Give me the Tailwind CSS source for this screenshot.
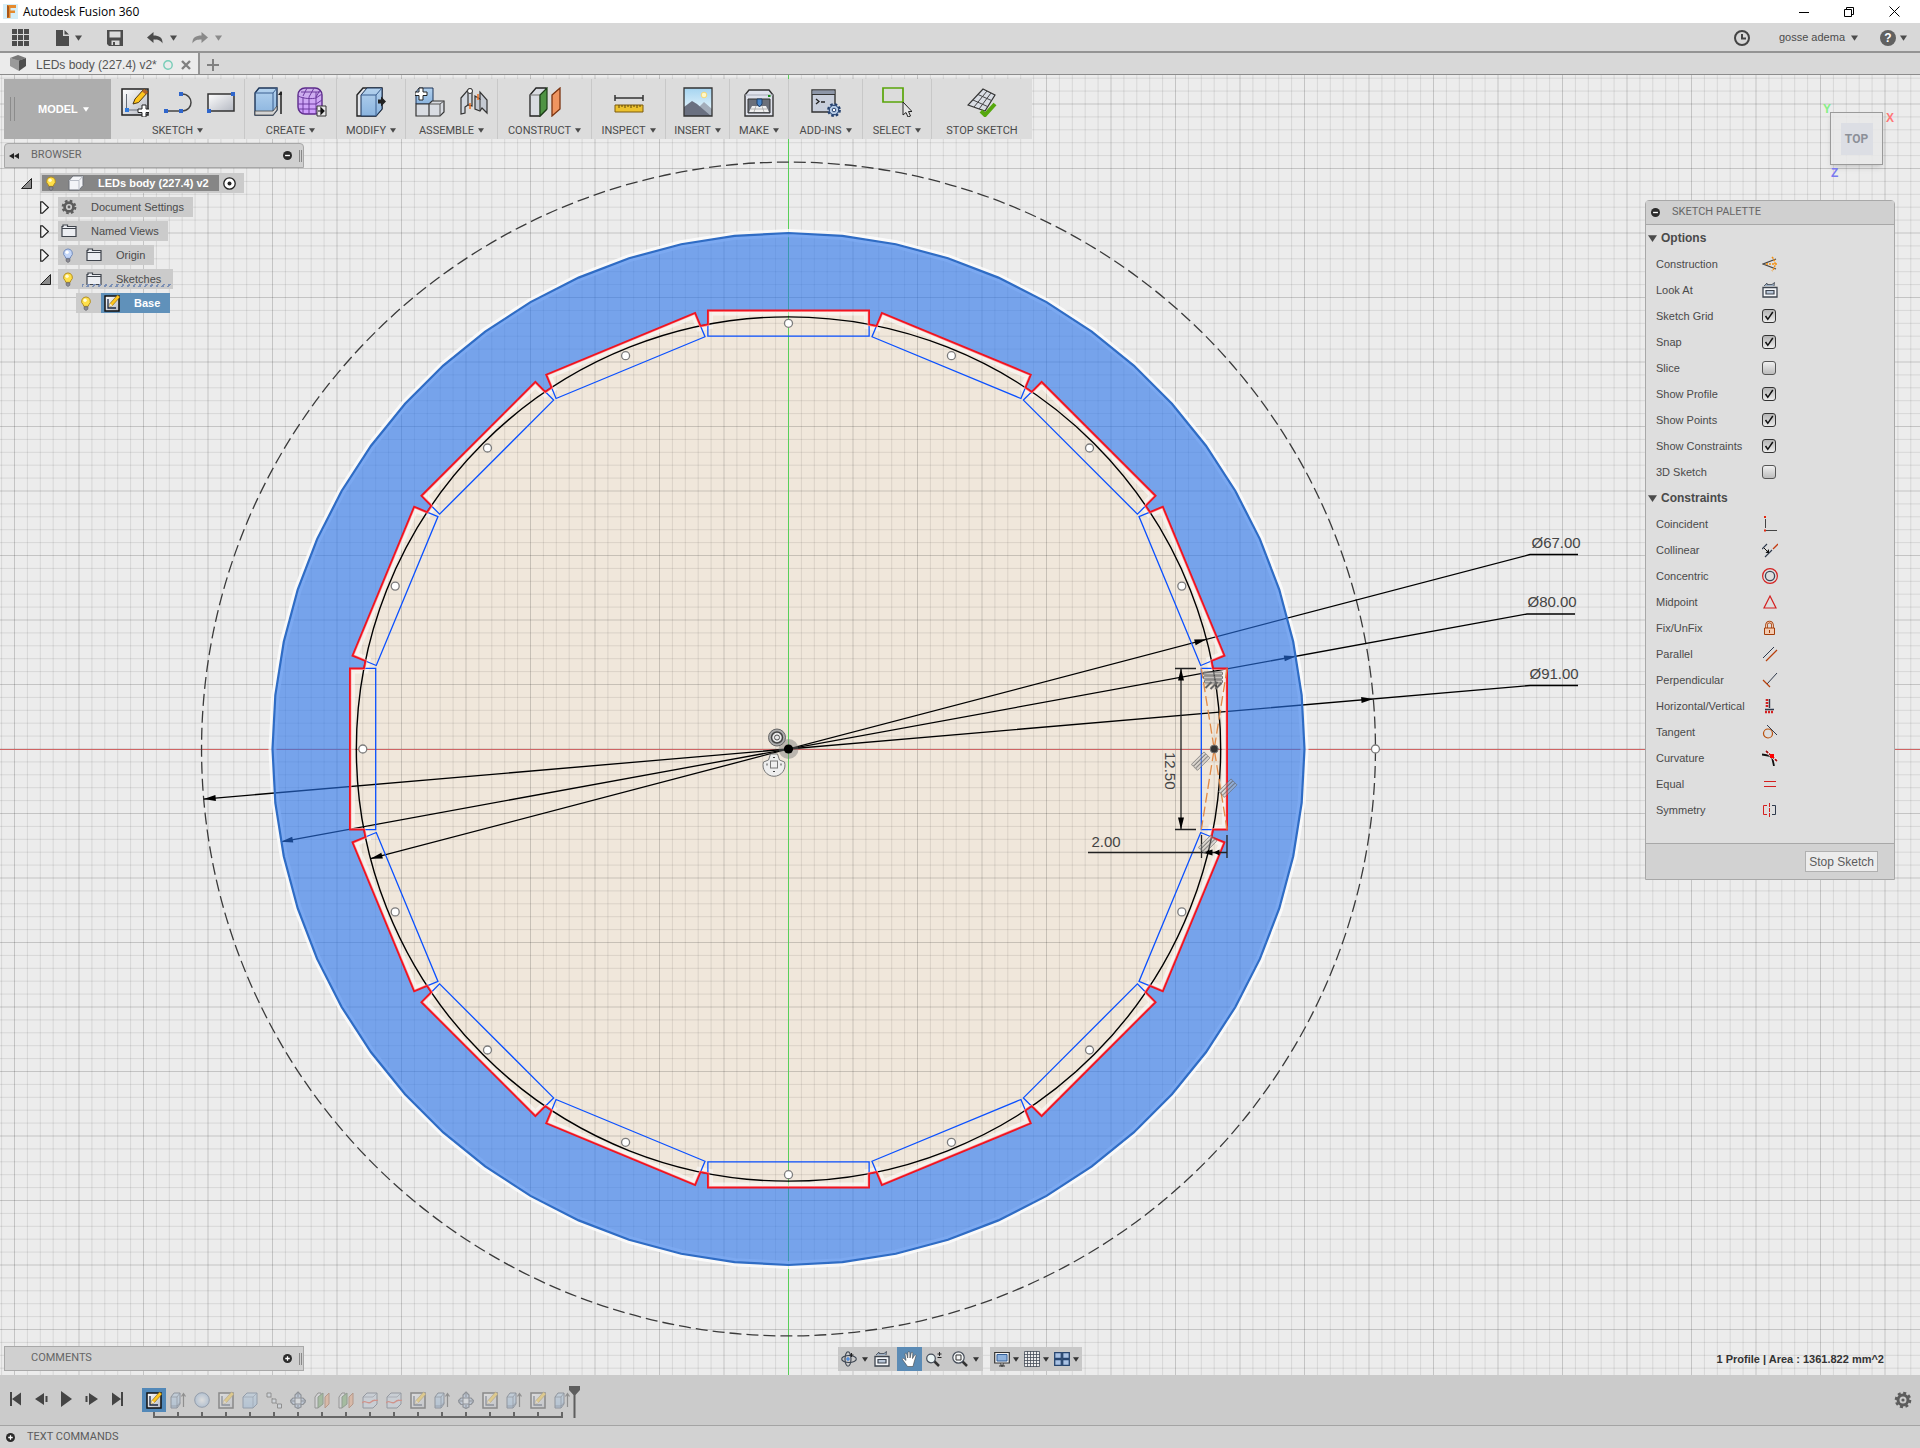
<!DOCTYPE html>
<html lang="en">
  <head>
    <meta charset="UTF-8" />
    <meta name="viewport" content="width=device-width, initial-scale=1.0" />
    <title>Autodesk Fusion 360</title>
    <script src="https://cdn.jsdelivr.net/npm/@tailwindcss/browser@4"></script>
  </head>
  <body class="flex h-screen flex-col overflow-hidden bg-[#ececec] font-['Liberation_Sans',Arial,sans-serif] text-[11px] text-[#4a4a4a]">
    <!-- Shared icons -->
    <svg class="absolute h-0 w-0" aria-hidden="true">
      <defs>
        <linearGradient id="g-blue" x1="0" y1="0" x2="0" y2="1"><stop offset="0" stop-color="#b4d2ee" /><stop offset="1" stop-color="#8ab4df" /></linearGradient>
        <linearGradient id="g-grey" x1="0" y1="0" x2="1" y2="1"><stop offset="0" stop-color="#ffffff" /><stop offset="1" stop-color="#b4b8c2" /></linearGradient>
        <linearGradient id="g-sky" x1="0" y1="0" x2="0" y2="1"><stop offset="0" stop-color="#a5d4f0" /><stop offset="1" stop-color="#f2fbff" /></linearGradient>
        <linearGradient id="g-purple" x1="0" y1="0" x2="0" y2="1"><stop offset="0" stop-color="#cdb3ea" /><stop offset="1" stop-color="#cf9bff" /></linearGradient>
        <radialGradient id="g-ball"><stop offset="0" stop-color="#ffffff" /><stop offset="1" stop-color="#8ab0dc" /></radialGradient>
      </defs>
      <symbol id="caret" viewBox="0 0 8 6"><path d="M0 0h8L4 6z" fill="currentColor" /></symbol>
      <symbol id="plus-dot" viewBox="0 0 10 10"><circle cx="5" cy="5" r="5" fill="#2b2b2b" /><path d="M5 2.5v5M2.5 5h5" stroke="#fff" stroke-width="1.4" /></symbol>
      <symbol id="minus-dot" viewBox="0 0 10 10"><circle cx="5" cy="5" r="5" fill="#2b2b2b" /><path d="M2.3 5h5.4" stroke="#fff" stroke-width="1.5" /></symbol>
      <symbol id="gear" viewBox="0 0 18 18"><circle cx="9" cy="9" r="5" fill="none" stroke="#5c5c5c" stroke-width="3" /><circle cx="9" cy="9" r="7.1" fill="none" stroke="#5c5c5c" stroke-width="2.4" stroke-dasharray="3 2.576" /><circle cx="9" cy="9" r="1.6" fill="#5c5c5c" /></symbol>
      <symbol id="bulb" viewBox="0 0 12 16"><path d="M6 1a4.7 4.7 0 0 1 3 8.300L8.300 11H3.700L3 9.300A4.700 4.700 0 0 1 6 1z" fill="#ffe04a" stroke="#b08a1c" /><circle cx="5" cy="4.500" r="1.800" fill="#fffbd8" /><path d="M4 11.500h4v2.500L6 15.500 4 14z" fill="#8c8c94" stroke="#55555e" stroke-width=".6" /></symbol>
      <symbol id="bulb-off" viewBox="0 0 12 16"><path d="M6 1a4.7 4.7 0 0 1 3 8.300L8.300 11H3.700L3 9.300A4.700 4.700 0 0 1 6 1z" fill="#c3d6f8" stroke="#6d86b8" /><circle cx="5" cy="4.500" r="1.800" fill="#fff" /><path d="M4 11.500h4v2.500L6 15.500 4 14z" fill="#8c8c94" stroke="#55555e" stroke-width=".6" /></symbol>
      <symbol id="folder" viewBox="0 0 16 14"><path d="M1 12.500v-10h1v-1.500h4.500v1.500H15v10z" fill="#eceef2" stroke="#3f444c" stroke-width="1.2" /><path d="M1 4.500h14" stroke="#3f444c" /></symbol>
      <symbol id="cube" viewBox="0 0 16 16"><path d="M1 5.500L5 1h10v9.500L11 15H1z" fill="#f3f4f7" stroke="#6d7178" /><path d="M1 5.500h10V15M11 5.500L15 1" fill="none" stroke="#b9bdc6" /></symbol>
      <symbol id="arrow-open" viewBox="0 0 11 11"><path d="M10.500.5v10H.5z" fill="#8b8b8b" stroke="#222" /></symbol>
      <symbol id="arrow-closed" viewBox="0 0 9 13"><path d="M.7.800h1.800L8.400 6.500 2.500 12.200H.7z" fill="#f4f4f4" stroke="#222" stroke-width="1.200" /></symbol>
      <symbol id="sketch" viewBox="0 0 16 18"><path d="M1 2h14v15H1z" fill="url(#g-grey)" stroke="#111" stroke-width="1.500" /><path d="M4 5v9h8" fill="none" stroke="#1c2a44" stroke-width="1.300" /><path d="M5 13l1-3.500L13.500 1 16 3 8.500 11.500z" fill="#ffc61e" stroke="#7a5a10" stroke-width=".6" /><path d="M5 13l1-3.500 2.500 2z" fill="#f7ead0" /></symbol>
      <symbol id="extrude" viewBox="0 0 16 18"><path d="M1 6l3-4h6v11l-3 4H1z" fill="url(#g-blue)" stroke="#23324a" /><path d="M1 6h6v11M7 6l3-4M1 15h6l3-3.500" fill="none" stroke="#23324a" stroke-width=".7" /><path d="M13.500 16V3M11.500 5.500l2-3 2 3" fill="none" stroke="#222" stroke-width="1.200" /></symbol>
      <symbol id="sphere" viewBox="0 0 16 18"><circle cx="8" cy="9" r="7.300" fill="url(#g-ball)" stroke="#2f4a70" /></symbol>
      <symbol id="box" viewBox="0 0 16 18"><path d="M1 6l4-4h10v11l-4 4H1z" fill="url(#g-blue)" stroke="#2f4a70" /><path d="M1 6h10v11M11 6l4-4" fill="none" stroke="#2f4a70" stroke-width=".6" /></symbol>
      <symbol id="points" viewBox="0 0 16 18"><path d="M3 4l10 11" stroke="#333" stroke-dasharray="2 1.500" /><path d="M1 2h4v4H1zM6 8h4v4H6zM11.500 13h4v4h-4z" fill="#dbe6f4" stroke="#222" /></symbol>
      <symbol id="move" viewBox="0 0 16 18"><path d="M8 1l3 3v3h2l3 3-3 3.500h-2V16l-3 1.500L5 16v-2.500H3L0 10l3-3h2V4z" fill="#a8c2e6" stroke="#222c3c" stroke-width="1.200" /><path d="M5 7h6v6H5z" fill="#e4ebf5" stroke="#222c3c" /><path d="M8 2v4M8 14v3M1 10h4M11 10h4" stroke="#222c3c" /></symbol>
      <symbol id="planes" viewBox="0 0 16 18"><path d="M1 6l3-4h3v11l-3 4H1z" fill="#e2e4e8" stroke="#333" /><path d="M4 6l5-4v11l-5 4z" fill="#5fa052" stroke="#2a4a26" /><path d="M11 6l4-4v11l-4 4z" fill="#ef9a68" stroke="#8a3c14" /></symbol>
      <symbol id="split" viewBox="0 0 16 18"><path d="M1 6l4-4h10v11l-4 4H1z" fill="#c8d4e6" stroke="#333f54" /><path d="M1 6h10l4-4" fill="none" stroke="#333f54" stroke-width=".6" /><path d="M0 12c3-4 6 2 9-1s4-1 7-2" fill="none" stroke="#d8301a" stroke-width="1.300" /></symbol>
      <symbol id="look-at" viewBox="0 0 16 16"><path d="M1 5.500h14V15H1z" fill="#f4f6f9" stroke="#3d444e" stroke-width="1.300" /><path d="M4 8.500h8v3.500H4z" fill="#b9c7d9" stroke="#3d444e" stroke-width="1.200" /><path d="M2 4l3-3v1.500h5L12.500.5 12 4" fill="#9fb2c8" stroke="#3d444e" stroke-width=".8" /></symbol>
      <symbol id="tick" viewBox="0 0 14 14"><path d="M3.500 7l2.300 3.300L10.800 3" fill="none" stroke="#111" stroke-width="1.500" /></symbol>
    </svg>

    <!-- Window title -->
    <header class="flex h-[23px] shrink-0 items-center bg-white pl-[3px] font-['Open_Sans','Noto_Sans',sans-serif] text-[12px] text-black">
      <svg class="h-4 w-4" viewBox="0 0 16 16"><path d="M0 0h15v15H0z" fill="#d5eef8" /><path d="M4 1h9v3H7.500v2.500H12V9H7.500v5H4z" fill="#e58a2e" /><path d="M4 1l2 1.500V13l-2 1z" fill="#a8571a" /></svg>
      <h1 class="ml-1">Autodesk Fusion 360</h1>
      <div class="ml-auto flex items-center gap-[35px] pr-5">
        <button aria-label="Minimize"><svg class="h-[10px] w-[10px]" viewBox="0 0 10 10"><path d="M0 5.500h10" stroke="#000" /></svg></button>
        <button aria-label="Restore"><svg class="h-[10px] w-[10px]" viewBox="0 0 10 10" fill="none" stroke="#000"><path d="M.5 2.500h7v7h-7zM2.500 2.500v-2h7v7h-2" /></svg></button>
        <button aria-label="Close"><svg class="h-[11px] w-[11px]" viewBox="0 0 11 11"><path d="M.5.5l10 10M10.500.5l-10 10" stroke="#000" /></svg></button>
      </div>
    </header>

    <!-- Quick access bar -->
    <div class="flex h-[30px] shrink-0 items-center border-b-2 border-[#949494] bg-[#d8d8d8] pl-3 pt-px text-[#4c4c4c]">
      <button aria-label="Data panel"><svg class="h-[17px] w-[17px]" viewBox="0 0 17 17" fill="#4c4c4c"><path d="M0 0h5v5H0zM6 0h5v5H6zM12 0h5v5h-5zM0 6h5v5H0zM6 6h5v5H6zM12 6h5v5h-5zM0 12h5v5H0zM6 12h5v5H6zM12 12h5v5h-5z" /></svg></button>
      <button class="ml-[27px] flex items-center gap-[6px]" aria-label="File">
        <svg class="h-4 w-[13px]" viewBox="0 0 13 16" fill="#4c4c4c"><path d="M0 0h7v6h6v10H0zM8.500 0L13 4.500H8.500z" /></svg>
        <svg class="h-[6px] w-[7px]"><use href="#caret" /></svg>
      </button>
      <button class="ml-[25px]" aria-label="Save"><svg class="h-4 w-4" viewBox="0 0 16 16"><path d="M0 0h16v16H2l-2-2z" fill="#4c4c4c" /><path d="M2.500 1.500h11v6h-11zM4.500 10.500h8V15h-8z" fill="#dadada" /><path d="M6 12h2v3H6z" fill="#4c4c4c" /></svg></button>
      <button class="ml-6 flex items-center gap-[7px]" aria-label="Undo">
        <svg class="h-3 w-4" viewBox="0 0 16 12"><path d="M0 5.500L6.500 0v3.500C12 3.500 16 5.500 15.500 11.500 13.500 8 11 7.500 6.500 7.500V11z" fill="#4c4c4c" /></svg>
        <svg class="h-[6px] w-[7px]"><use href="#caret" /></svg>
      </button>
      <button class="ml-[15px] flex items-center gap-[7px] text-[#8a8a8a]" aria-label="Redo">
        <svg class="h-3 w-4" viewBox="0 0 16 12"><path d="M16 5.500L9.500 0v3.500C4 3.500 0 5.500.5 11.500 2.500 8 5 7.500 9.500 7.500V11z" fill="#8a8a8a" /></svg>
        <svg class="h-[6px] w-[7px]"><use href="#caret" /></svg>
      </button>
      <div class="ml-auto flex items-center pr-[13px]">
        <button aria-label="Job status"><svg class="h-4 w-4" viewBox="0 0 16 16" fill="none" stroke="#444"><circle cx="8" cy="8" r="7" stroke-width="2" /><path d="M8 4v4.500h4" stroke-width="2" /></svg></button>
        <button class="ml-[29px] flex items-center gap-[6px]">gosse adema <svg class="h-[6px] w-[7px]"><use href="#caret" /></svg></button>
        <button class="ml-[22px] flex items-center gap-1" aria-label="Help">
          <span class="flex h-4 w-4 items-center justify-center rounded-full bg-[#616161] text-[12px] font-bold text-white">?</span>
          <svg class="h-[6px] w-[7px]"><use href="#caret" /></svg>
        </button>
      </div>
    </div>

    <!-- Document tabs -->
    <div class="flex h-[22px] shrink-0 border-b border-[#8c8c8c] bg-[#d8d8d8]">
      <div class="flex items-center border-r-2 border-[#949494] bg-[#ebebeb] pl-[10px] pr-[7px] pt-[2px] text-[12px] text-[#555]">
        <svg class="mb-1 h-4 w-4" viewBox="0 0 16 16"><path d="M0 3l8-3 8 3-8 3z" fill="#777" /><path d="M0 3l9 2.500V16L0 11z" fill="#9a9a9a" /><path d="M9 5.500L16 3v8l-7 5z" fill="#4f4f4f" /></svg>
        <span class="ml-[10px]">LEDs body (227.4) v2*</span>
        <svg class="ml-[6px] h-[10px] w-[10px]" viewBox="0 0 10 10"><circle cx="5" cy="5" r="4.200" fill="none" stroke="#78cdb8" stroke-width="1.400" /></svg>
        <button class="ml-2" aria-label="Close tab"><svg class="h-[10px] w-[10px]" viewBox="0 0 10 10"><path d="M1 1l8 8M9 1L1 9" stroke="#808080" stroke-width="2.400" /></svg></button>
      </div>
      <button class="ml-[7px] pt-[2px]" aria-label="New tab"><svg class="h-3 w-3" viewBox="0 0 12 12"><path d="M6 0v12M0 6h12" stroke="#808080" stroke-width="2" /></svg></button>
    </div>

    <!-- Canvas -->
    <main class="relative min-h-0 flex-1 overflow-hidden">
      <svg id="canvas" class="absolute inset-0 h-full w-full" viewBox="0 0 1920 1300" preserveAspectRatio="xMidYMid slice">
        <g id="drawing" transform="translate(788.5 674)"></g>
      </svg>

      <!-- Ribbon -->
      <div class="absolute left-1 top-1 flex h-[60px] bg-[#dcdcdc] font-['Liberation_Sans_Narrow','Arial_Narrow',Roboto,sans-serif] text-[11px]">
        <button class="flex w-[107px] items-center bg-[#adadad] pl-[6px] font-['Liberation_Sans',Arial,sans-serif] text-[11px] font-bold text-white">
          <span class="h-6 w-[5px] border-x border-[#8c8c8c]"></span>
          <span class="ml-[23px]">MODEL</span>
          <svg class="ml-[5px] h-[5px] w-[6px]"><use href="#caret" /></svg>
        </button>
        <div class="flex divide-x divide-[#c8c8c8]">
          <div class="flex w-[134px] flex-col items-center justify-between pt-2">
            <div class="flex gap-[15px]">
              <svg class="h-[30px] w-7" viewBox="0 0 28 30"><path d="M1 2h26v26H1z" fill="url(#g-grey)" stroke="#222" stroke-width="1.500" /><path d="M5.500 7v16H22" fill="none" stroke="#666d78" /><path d="M4 21h4v4H4z" fill="#2f7be0" /><path d="M12 17l2-5L23 2l4 3-9.500 10.500z" fill="#ffc61e" stroke="#4a3510" /><path d="M23 2l4 3-2 2.500-4-3z" fill="#b5652c" /><path d="M21 18h4v4h4v3.500h-4V30h-4v-4.500h-4V22h4z" fill="#fff" stroke="#222" /></svg>
              <svg class="h-[30px] w-7" viewBox="0 0 28 30"><path d="M2 24h16c12 0 12-17 0-17" fill="none" stroke="#444" stroke-width="1.500" /><path d="M0 22h4v4H0zM15 22h4v4h-4zM15 5h4v4h-4z" fill="#2f66cc" /></svg>
              <svg class="h-[30px] w-7" viewBox="0 0 28 30"><path d="M1 7h26v17H1z" fill="url(#g-grey)" stroke="#333" stroke-width="1.500" /><path d="M24 5h4v4h-4zM0 22h4v4H0z" fill="#2f66cc" /></svg>
            </div>
            <button class="flex items-center gap-1">SKETCH <svg class="h-[5px] w-[6px]"><use href="#caret" /></svg></button>
          </div>
          <div class="flex w-[92px] flex-col items-center justify-between pt-2">
            <div class="flex gap-[15px]">
              <svg class="h-[30px] w-7" viewBox="0 0 28 30"><path d="M1 6l4-5h18v22l-4 5H1z" fill="url(#g-blue)" stroke="#1d3558" stroke-width="1.400" /><path d="M1 6h18v18M19 6l4-5" fill="none" stroke="#3b5f90" /><path d="M1 24h18l4-5v4l-4 5H1z" fill="#d4d4d4" stroke="#444" stroke-width=".8" /><path d="M27 27V5" stroke="#222" stroke-width="1.500" /><path d="M24 8l3-4 3 4z" fill="#222" /></svg>
              <svg class="h-[30px] w-[30px]" viewBox="0 0 30 30"><rect x="1" y="1" width="24" height="26" rx="7" fill="url(#g-purple)" stroke="#5c2a8a" stroke-width="1.400" /><path d="M1 9c6 3 14 3 18 2l6-4M1 17h18l6-4M1 22h18l6-3M6 10v16M12 10v17M19 5v22M6 9l4-8M12 10l5-9M19 10l4-7M4 5h19" fill="none" stroke="#6c3a9e" /><path d="M20 19h9v10h-9z" fill="#e8e8e8" stroke="#333" /><path d="M21 24h4m-1-3l3 3-3 3z" stroke="#111" stroke-width="1.200" fill="#111" /></svg>
            </div>
            <button class="flex items-center gap-1">CREATE <svg class="h-[5px] w-[6px]"><use href="#caret" /></svg></button>
          </div>
          <div class="flex w-[69px] flex-col items-center justify-between pt-2">
            <svg class="h-[30px] w-[30px]" viewBox="0 0 30 30"><path d="M1 8l6-7h19v21l-6 7H1z" fill="#e4e6ea" stroke="#222" stroke-width="1.400" /><path d="M5 8l6-7h15v21l-6 7H5z" fill="url(#g-blue)" stroke="#1d3558" /><path d="M5 8h15v21M20 8l6-7" fill="none" stroke="#3b5f90" /><path d="M22 12.500h3V9.500l5 5-5 5v-3h-3z" fill="#222" /></svg>
            <button class="flex items-center gap-1">MODIFY <svg class="h-[5px] w-[6px]"><use href="#caret" /></svg></button>
          </div>
          <div class="flex w-[92px] flex-col items-center justify-between pt-2">
            <div class="flex gap-[15px]">
              <svg class="h-[30px] w-[30px]" viewBox="0 0 30 30"><path d="M1 5l3-4h14v13l-3 3H1z" fill="url(#g-blue)" stroke="#1d3558" /><path d="M1 17h13v12H1zM14 17l3-3h12v11l-4 4H14z" fill="#d9dce2" stroke="#333" stroke-width="1.200" /><path d="M14 17h11v12M25 17l4-3" fill="none" stroke="#555" /><path d="M4 1h4v4h4v3.500H8V13H4V8.500H0V5h4z" fill="#fff" stroke="#222" /></svg>
              <svg class="h-[30px] w-7" viewBox="0 0 28 30"><path d="M1 11l7-8c1-2 4-2 4 1v15l-4-1-3 2v6l-4 1z" fill="#d3d8df" stroke="#333" stroke-width="1.200" /><path d="M8 5v13M27 26l-5-5-2 3-5-2V9l5 3V5l7 8z" fill="#c4c9d2" stroke="#333" stroke-width="1.200" /><path d="M20 12v11" stroke="#333" /><circle cx="10" cy="4" r="2.500" fill="#fff" stroke="#333" /><path d="M10 16v6M18 7v6" stroke="#f07020" stroke-width="1.500" /></svg>
            </div>
            <button class="flex items-center gap-1">ASSEMBLE <svg class="h-[5px] w-[6px]"><use href="#caret" /></svg></button>
          </div>
          <div class="flex w-[94px] flex-col items-center justify-between pt-2">
            <svg class="h-[30px] w-8" viewBox="0 0 32 30"><path d="M1 8l6-7h10v22l-6 6H1z" fill="#d9dce2" stroke="#222" stroke-width="1.300" /><path d="M1 8h10v21" fill="none" stroke="#777" /><path d="M11 8l7-7v21l-7 7z" fill="#4f9444" stroke="#1d4018" stroke-width="1.200" /><path d="M23 8l8-7v21l-8 7z" fill="#ef9560" stroke="#7c3410" stroke-width="1.300" /></svg>
            <button class="flex items-center gap-1">CONSTRUCT <svg class="h-[5px] w-[6px]"><use href="#caret" /></svg></button>
          </div>
          <div class="flex w-[74px] flex-col items-center justify-between pt-2">
            <svg class="h-[30px] w-[30px]" viewBox="0 0 30 30"><path d="M1 11h28M1 8v6M29 8v6" stroke="#333" stroke-width="1.500" /><path d="M1 18h28v7H1z" fill="#ecc22e" stroke="#7d5a0c" /><path d="M5 18v3M8 18v2M11 18v3M14 18v2M17 18v3M20 18v2M23 18v3M26 18v2" stroke="#5d4408" /></svg>
            <button class="flex items-center gap-1">INSPECT <svg class="h-[5px] w-[6px]"><use href="#caret" /></svg></button>
          </div>
          <div class="flex w-[64px] flex-col items-center justify-between pt-2">
            <svg class="h-[30px] w-[30px]" viewBox="0 0 30 30"><path d="M1 1h28v28H1z" fill="url(#g-sky)" /><circle cx="21" cy="8" r="2.800" fill="#fff8c8" stroke="#f5d878" /><path d="M12 24l9-9 8 7v7H12z" fill="#a3adba" /><path d="M1 20l8-6 5 3 14 12H1z" fill="#6a7080" /><path d="M1 1h28v28H1z" fill="none" stroke="#333" stroke-width="1.300" /></svg>
            <button class="flex items-center gap-1">INSERT <svg class="h-[5px] w-[6px]"><use href="#caret" /></svg></button>
          </div>
          <div class="flex w-[59px] flex-col items-center justify-between pt-2">
            <svg class="h-[30px] w-[30px]" viewBox="0 0 30 30"><path d="M1 8l4-5h20l4 5v21H1z" fill="#dfe2ec" stroke="#333" stroke-width="1.400" /><path d="M1 8h28" stroke="#a8acb8" /><path d="M4 12h22v14H4z" fill="#6b707a" stroke="#333" /><path d="M8 19h14l3 6H5z" fill="#f0f0f0" /><path d="M7 22h16M12 19l-2 6M18 19l2 6" stroke="#999" stroke-width=".7" /><path d="M13 12h5v5l-2.500 3-2.500-3z" fill="#4a86c8" stroke="#1d3e68" /><path d="M24 8h2.500v2H24z" fill="#18901c" /></svg>
            <button class="flex items-center gap-1">MAKE <svg class="h-[5px] w-[6px]"><use href="#caret" /></svg></button>
          </div>
          <div class="flex w-[74px] flex-col items-center justify-between pt-2">
            <svg class="h-[30px] w-[30px]" viewBox="0 0 30 30"><path d="M1 3h23v22H1z" fill="#c9cfdc" stroke="#333" stroke-width="1.400" /><path d="M1.500 3.500h22V7h-22z" fill="#8d96a8" /><path d="M1 7.500h23" stroke="#333" /><path d="M5 12l3 2.500L5 17M10 15h4" fill="none" stroke="#222" stroke-width="1.300" /><circle cx="23" cy="23" r="5.700" fill="#9ab6dc" stroke="#24406e" stroke-width="2.400" stroke-dasharray="2.500 1.977" /><circle cx="23" cy="23" r="4.700" fill="#b6cce8" stroke="#24406e" /><circle cx="23" cy="23" r="1.800" fill="#fff" stroke="#24406e" /></svg>
            <button class="flex items-center gap-1">ADD-INS <svg class="h-[5px] w-[6px]"><use href="#caret" /></svg></button>
          </div>
          <div class="flex w-[69px] flex-col items-center justify-between pt-2">
            <svg class="h-[30px] w-[30px]" viewBox="0 0 30 30"><path d="M1 1h20v14H1z" fill="none" stroke="#5aa50a" stroke-width="1.700" /><path d="M21 15v13l3-2.500 2 4.500 2.500-1-2-4.500h3.500z" fill="#e6e6e6" stroke="#222" /></svg>
            <button class="flex items-center gap-1">SELECT <svg class="h-[5px] w-[6px]"><use href="#caret" /></svg></button>
          </div>
          <div class="flex w-[100px] flex-col items-center justify-between pt-2">
            <svg class="h-[30px] w-[30px]" viewBox="0 0 30 30"><path d="M16 2l12 6-10 16L1 18z" fill="#d9dde4" stroke="#333" stroke-width="1.200" /><path d="M20 4L7 20M24 6L12 22M11 7.500l13.500 6M6 13l14.500 6.500" stroke="#444" /><path d="M14 24l4 4L28 17" fill="none" stroke="#56a80e" stroke-width="4" /></svg>
            <button>STOP SKETCH</button>
          </div>
        </div>
      </div>

      <!-- Browser -->
      <section class="absolute left-1 top-[68px] w-[300px]">
        <h2 class="flex h-[25px] items-center rounded-t-sm border border-[#a8a8a8] bg-[#d0d0d0] pl-1 pr-px font-['Liberation_Sans_Narrow','Arial_Narrow',Roboto,sans-serif] text-[11px] text-[#666]">
          <svg class="h-[6px] w-[10px]" viewBox="0 0 10 6"><path d="M5 0v6L0 3zM10 0v6L5 3z" fill="#222" /></svg>
          <span class="ml-3">BROWSER</span>
          <button class="ml-auto" aria-label="Collapse browser"><svg class="h-[9px] w-[9px]"><use href="#minus-dot" /></svg></button>
          <span class="ml-[7px] h-3 w-[3px] border-x border-[#888]"></span>
        </h2>
        <ul class="mt-[5px] flex flex-col gap-1">
          <li class="flex h-5 items-center pl-[17px]">
            <button aria-label="Collapse"><svg class="h-[11px] w-[11px]"><use href="#arrow-open" /></svg></button>
            <div class="ml-2 flex h-5 items-center bg-[#cbcbcb] pl-[2px] pr-2">
              <div class="flex h-4 items-center bg-[#868686] pl-[3px] pr-[10px] font-bold text-white">
                <svg class="h-[15px] w-3"><use href="#bulb" /></svg>
                <svg class="ml-[11px] h-4 w-4"><use href="#cube" /></svg>
                <span class="ml-[14px]">LEDs body (227.4) v2</span>
              </div>
              <svg class="ml-1 h-[13px] w-[13px]" viewBox="0 0 13 13"><circle cx="6.500" cy="6.500" r="5.700" fill="#fff" stroke="#222" stroke-width="1.300" /><circle cx="6.500" cy="6.500" r="2" fill="#222" /></svg>
            </div>
          </li>
          <li class="flex h-5 items-center pl-9">
            <button aria-label="Expand"><svg class="h-[13px] w-[9px]"><use href="#arrow-closed" /></svg></button>
            <div class="ml-[9px] flex h-5 items-center bg-[#cbcbcb] pl-[3px] pr-[9px]">
              <svg class="h-4 w-4"><use href="#gear" /></svg>
              <span class="ml-[14px]">Document Settings</span>
            </div>
          </li>
          <li class="flex h-5 items-center pl-9">
            <button aria-label="Expand"><svg class="h-[13px] w-[9px]"><use href="#arrow-closed" /></svg></button>
            <div class="ml-[9px] flex h-5 items-center bg-[#cbcbcb] pl-[3px] pr-[9px]">
              <svg class="h-[14px] w-4"><use href="#folder" /></svg>
              <span class="ml-[14px]">Named Views</span>
            </div>
          </li>
          <li class="flex h-5 items-center pl-9">
            <button aria-label="Expand"><svg class="h-[13px] w-[9px]"><use href="#arrow-closed" /></svg></button>
            <div class="ml-[9px] flex h-5 items-center bg-[#cbcbcb] pl-1 pr-[9px]">
              <svg class="h-[15px] w-3"><use href="#bulb-off" /></svg>
              <svg class="ml-3 h-[14px] w-4"><use href="#folder" /></svg>
              <span class="ml-[14px]">Origin</span>
            </div>
          </li>
          <li class="flex h-5 items-center pl-9">
            <button aria-label="Collapse"><svg class="h-[11px] w-[11px]"><use href="#arrow-open" /></svg></button>
            <div class="relative ml-[7px] flex h-5 items-center bg-[#cbcbcb] pl-1 pr-3">
              <svg class="h-[15px] w-3"><use href="#bulb" /></svg>
              <svg class="ml-3 h-[14px] w-4"><use href="#folder" /></svg>
              <span class="ml-[14px]">Sketches</span>
              <span class="absolute bottom-[2px] left-6 right-[2px] h-[3px] bg-[repeating-linear-gradient(120deg,#7a8fb5_0_2px,transparent_2px_5px)]"></span>
            </div>
          </li>
          <li class="flex h-5 items-center pl-[72px]">
            <div class="flex h-5 items-center bg-[#cbcbcb] pl-1 pr-[9px]"><svg class="h-[15px] w-3"><use href="#bulb" /></svg></div>
            <div class="flex h-5 items-center bg-[#6091ba] pl-[3px] pr-[10px] font-bold text-white">
              <svg class="h-[18px] w-4"><use href="#sketch" /></svg>
              <span class="ml-[14px]">Base</span>
            </div>
          </li>
        </ul>
      </section>

      <!-- View cube -->
      <div class="absolute right-[37px] top-[37px] flex h-[53px] w-[53px] items-center justify-center border border-[#9a9a9a] bg-[#e8e8e8]/80 shadow-md">
        <span class="flex h-8 w-8 items-center justify-center bg-[#dcdee4] font-['Roboto',sans-serif] text-[12px] font-bold text-[#8c9098]">TOP</span>
        <span class="absolute -left-2 -top-[10px] text-[12px] font-bold leading-none text-[#86f086]">Y</span>
        <span class="absolute -right-3 -top-px text-[12px] font-bold leading-none text-[#f77]">X</span>
        <span class="absolute -bottom-[15px] left-0 text-[12px] font-bold leading-none text-[#7a7af0]">Z</span>
      </div>

      <!-- Sketch palette -->
      <section class="absolute right-[25px] top-[125px] w-[250px] rounded-t-sm border border-[#a8a8a8] bg-[#dedede]">
        <h2 class="flex h-[24px] items-center border-b border-[#a8a8a8] bg-[#d0d0d0] pl-[5px] font-['Liberation_Sans_Narrow','Arial_Narrow',Roboto,sans-serif] text-[11px] text-[#666]">
          <svg class="h-[9px] w-[9px]"><use href="#minus-dot" /></svg>
          <span class="ml-3">SKETCH PALETTE</span>
        </h2>
        <div class="pb-5">
          <h3 class="flex h-[26px] items-center gap-1 pl-[2px] text-[12px] font-bold"><svg class="h-[7px] w-[9px]"><use href="#caret" /></svg>Options</h3>
          <button class="flex h-[26px] w-full items-center pl-[10px] text-left"><span class="w-[106px]">Construction</span>
            <svg class="h-4 w-4" viewBox="0 0 16 16" fill="none"><path d="M14 3L1 8l13 5" stroke="#444" stroke-width="1.300" /><path d="M4 8h12M10 1c4 4 4 10 0 14" stroke="#f5900f" stroke-width="1.500" stroke-dasharray="2 1" /></svg></button>
          <button class="flex h-[26px] w-full items-center pl-[10px] text-left"><span class="w-[106px]">Look At</span>
            <svg class="h-4 w-4"><use href="#look-at" /></svg></button>
          <label class="flex h-[26px] items-center pl-[10px]"><span class="w-[106px]">Sketch Grid</span>
            <span class="relative h-[14px] w-[14px]"><input type="checkbox" checked class="peer block h-[14px] w-[14px] appearance-none rounded-[3px] border border-[#333] bg-linear-to-b from-[#b4b4b4] to-[#ececec]" /><svg class="absolute inset-0 hidden h-[14px] w-[14px] peer-checked:block"><use href="#tick" /></svg></span></label>
          <label class="flex h-[26px] items-center pl-[10px]"><span class="w-[106px]">Snap</span>
            <span class="relative h-[14px] w-[14px]"><input type="checkbox" checked class="peer block h-[14px] w-[14px] appearance-none rounded-[3px] border border-[#333] bg-linear-to-b from-[#b4b4b4] to-[#ececec]" /><svg class="absolute inset-0 hidden h-[14px] w-[14px] peer-checked:block"><use href="#tick" /></svg></span></label>
          <label class="flex h-[26px] items-center pl-[10px]"><span class="w-[106px]">Slice</span>
            <span class="relative h-[14px] w-[14px]"><input type="checkbox" class="peer block h-[14px] w-[14px] appearance-none rounded-[3px] border border-[#555] bg-linear-to-b from-[#f0f0f0] to-[#bcbcbc]" /><svg class="absolute inset-0 hidden h-[14px] w-[14px] peer-checked:block"><use href="#tick" /></svg></span></label>
          <label class="flex h-[26px] items-center pl-[10px]"><span class="w-[106px]">Show Profile</span>
            <span class="relative h-[14px] w-[14px]"><input type="checkbox" checked class="peer block h-[14px] w-[14px] appearance-none rounded-[3px] border border-[#333] bg-linear-to-b from-[#b4b4b4] to-[#ececec]" /><svg class="absolute inset-0 hidden h-[14px] w-[14px] peer-checked:block"><use href="#tick" /></svg></span></label>
          <label class="flex h-[26px] items-center pl-[10px]"><span class="w-[106px]">Show Points</span>
            <span class="relative h-[14px] w-[14px]"><input type="checkbox" checked class="peer block h-[14px] w-[14px] appearance-none rounded-[3px] border border-[#333] bg-linear-to-b from-[#b4b4b4] to-[#ececec]" /><svg class="absolute inset-0 hidden h-[14px] w-[14px] peer-checked:block"><use href="#tick" /></svg></span></label>
          <label class="flex h-[26px] items-center pl-[10px]"><span class="w-[106px]">Show Constraints</span>
            <span class="relative h-[14px] w-[14px]"><input type="checkbox" checked class="peer block h-[14px] w-[14px] appearance-none rounded-[3px] border border-[#333] bg-linear-to-b from-[#b4b4b4] to-[#ececec]" /><svg class="absolute inset-0 hidden h-[14px] w-[14px] peer-checked:block"><use href="#tick" /></svg></span></label>
          <label class="flex h-[26px] items-center pl-[10px]"><span class="w-[106px]">3D Sketch</span>
            <span class="relative h-[14px] w-[14px]"><input type="checkbox" class="peer block h-[14px] w-[14px] appearance-none rounded-[3px] border border-[#555] bg-linear-to-b from-[#f0f0f0] to-[#bcbcbc]" /><svg class="absolute inset-0 hidden h-[14px] w-[14px] peer-checked:block"><use href="#tick" /></svg></span></label>

          <h3 class="flex h-[26px] items-center gap-1 pl-[2px] text-[12px] font-bold"><svg class="h-[7px] w-[9px]"><use href="#caret" /></svg>Constraints</h3>
          <button class="flex h-[26px] w-full items-center pl-[10px] text-left"><span class="w-[106px]">Coincident</span>
            <svg class="h-4 w-4" viewBox="0 0 16 16"><path d="M3.500 3v9M4 14.500h11" stroke="#444" /><path d="M2 0h2v2H2zM2 13.500h2v2H2z" fill="#e42a10" /></svg></button>
          <button class="flex h-[26px] w-full items-center pl-[10px] text-left"><span class="w-[106px]">Collinear</span>
            <svg class="h-4 w-4" viewBox="0 0 16 16" fill="none"><path d="M0 7l5-5M3 15l7-7" stroke="#2f3a4c" stroke-width="1.200" /><path d="M11 7l5-5" stroke="#c43a10" stroke-width="1.300" /><path d="M2 6l4 4" stroke="#111" /><path d="M7 11V7L3.500 11z" fill="#111" /></svg></button>
          <button class="flex h-[26px] w-full items-center pl-[10px] text-left"><span class="w-[106px]">Concentric</span>
            <svg class="h-4 w-4" viewBox="0 0 16 16" fill="none"><circle cx="8" cy="8" r="7.400" stroke="#d42020" stroke-width="1.200" /><circle cx="8" cy="8" r="4.600" stroke="#3c4658" stroke-width="1.300" /></svg></button>
          <button class="flex h-[26px] w-full items-center pl-[10px] text-left"><span class="w-[106px]">Midpoint</span>
            <svg class="h-4 w-4" viewBox="0 0 16 16"><path d="M8 2l6 12H2z" fill="none" stroke="#d42020" stroke-width="1.200" /></svg></button>
          <button class="flex h-[26px] w-full items-center pl-[10px] text-left"><span class="w-[106px]">Fix/UnFix</span>
            <svg class="h-4 w-4" viewBox="0 0 16 16"><path d="M4.500 8V5a3 3 0 0 1 6 0v3" fill="none" stroke="#a43c08" stroke-width="2.600" /><path d="M4.500 8V5a3 3 0 0 1 6 0v3" fill="none" stroke="#f4cbb0" /><path d="M2.500 8h10v6.500h-10z" fill="#f4cbb0" stroke="#a43c08" /><path d="M7.500 10v3" stroke="#a43c08" /></svg></button>
          <button class="flex h-[26px] w-full items-center pl-[10px] text-left"><span class="w-[106px]">Parallel</span>
            <svg class="h-4 w-4" viewBox="0 0 16 16"><path d="M1 12L12 1" stroke="#2f3a4c" /><path d="M4 15L15 4" stroke="#b8400c" stroke-width="1.200" /></svg></button>
          <button class="flex h-[26px] w-full items-center pl-[10px] text-left"><span class="w-[106px]">Perpendicular</span>
            <svg class="h-4 w-4" viewBox="0 0 16 16"><path d="M5 12L15 1" stroke="#2f3a4c" /><path d="M1 8l7 7" stroke="#b8400c" stroke-width="1.200" /></svg></button>
          <button class="flex h-[26px] w-full items-center pl-[10px] text-left"><span class="w-[106px]">Horizontal/Vertical</span>
            <svg class="h-4 w-4" viewBox="0 0 16 16"><path d="M7.500 1v9M3 11.500h9" stroke="#2f3a4c" stroke-width="1.400" /><path d="M5 1v9" stroke="#d42020" stroke-width="2.600" stroke-dasharray="2 1" /><path d="M3 14h9" stroke="#d42020" stroke-width="2.600" stroke-dasharray="2 1" /></svg></button>
          <button class="flex h-[26px] w-full items-center pl-[10px] text-left"><span class="w-[106px]">Tangent</span>
            <svg class="h-4 w-4" viewBox="0 0 16 16"><circle cx="6" cy="9.500" r="4.500" fill="none" stroke="#b8500c" stroke-width="1.200" /><path d="M5 1l10 10" stroke="#2f3a4c" /></svg></button>
          <button class="flex h-[26px] w-full items-center pl-[10px] text-left"><span class="w-[106px]">Curvature</span>
            <svg class="h-4 w-4" viewBox="0 0 16 16" fill="none"><path d="M0 4.500l9 1.500M10 7l2 9" stroke="#111" stroke-width="1.800" /><path d="M4 1l11 10" stroke="#fff" stroke-width="3" /><path d="M4 1l11 10" stroke="#a01010" stroke-width="1.800" stroke-dasharray="3 1" /><path d="M8 4h4v4H8z" fill="#f00" /></svg></button>
          <button class="flex h-[26px] w-full items-center pl-[10px] text-left"><span class="w-[106px]">Equal</span>
            <svg class="h-4 w-4" viewBox="0 0 16 16"><path d="M2 5.500h12M2 10.500h12" stroke="#d42020" stroke-width="1.200" /></svg></button>
          <button class="flex h-[26px] w-full items-center pl-[10px] text-left"><span class="w-[106px]">Symmetry</span>
            <svg class="h-4 w-4" viewBox="0 0 16 16" fill="none"><path d="M5 3.500H1.500v9H5" stroke="#d42020" /><path d="M7.500 1v14" stroke="#d42020" stroke-dasharray="4 1" /><path d="M10 3.500h3.500v9H10" stroke="#2f3a4c" /></svg></button>
        </div>
        <div class="flex h-9 items-center justify-end border-t border-[#a8a8a8] bg-[#d2d2d2] pr-4">
          <button class="h-[21px] border border-[#b0b0b0] bg-[#ececec] px-[3px] text-[12px] text-[#5c5c5c]">Stop Sketch</button>
        </div>
      </section>

      <!-- Comments -->
      <section class="absolute bottom-1 left-1 flex h-[25px] w-[300px] items-center border border-[#a8a8a8] bg-[#d0d0d0] pl-[26px] pr-px font-['Liberation_Sans_Narrow','Arial_Narrow',Roboto,sans-serif] text-[11px] text-[#666]">
        <h2>COMMENTS</h2>
        <button class="ml-auto" aria-label="Expand comments"><svg class="h-[9px] w-[9px]"><use href="#plus-dot" /></svg></button>
        <span class="ml-[7px] h-3 w-[3px] border-x border-[#888]"></span>
      </section>

      <!-- Navigation bar -->
      <nav class="absolute bottom-1 left-0 right-0 flex h-6 justify-center gap-[7px] text-[#333]">
        <div class="flex items-center bg-[#c8c8c8] pl-[3px]">
          <button class="flex items-center gap-[5px]" aria-label="Orbit"><svg class="h-4 w-4" viewBox="0 0 16 16" fill="none" stroke="#3c4450" stroke-width="1.100"><ellipse cx="8" cy="8" rx="7.300" ry="3.500" /><ellipse cx="7" cy="8" rx="3" ry="7.300" /><path d="M10.500 2v4M8.500 4h4" stroke="#222" /><path d="M7 6v4M5 8h4" stroke="#2f7be0" /></svg><svg class="h-[5px] w-[6px]"><use href="#caret" /></svg></button>
          <button class="ml-[6px]" aria-label="Look At"><svg class="h-4 w-4"><use href="#look-at" /></svg></button>
          <button class="ml-[7px] flex h-6 w-[25px] items-center justify-center bg-[#5b8bb5]" aria-label="Pan"><svg class="h-4 w-4" viewBox="0 0 16 16"><path d="M4.500 14L.5 8.500c-.5-1 .8-1.500 1.500-.8L4 9.500 3 3c0-1 1.500-1 1.700 0l1 4L6 1.500c.1-1.100 1.700-1.100 1.800 0L8 7l1.200-5c.3-1 1.700-.8 1.600.2L10.500 7.500l2-3.300c.5-.9 1.800-.3 1.500.6L12 11.500 11 15.500H5.500z" fill="#fff" stroke="#444" stroke-width=".6" /></svg></button>
          <button class="ml-1" aria-label="Zoom"><svg class="h-4 w-4" viewBox="0 0 16 16" fill="none"><path d="M8 10l5 5" stroke="#333" stroke-width="2.500" /><circle cx="5" cy="7.500" r="4.300" fill="#e9f3f3" stroke="#444c58" stroke-width="1.200" /><path d="M13.500 1v4M11.500 3h4M11.500 6.500h4" stroke="#222" /></svg></button>
          <button class="ml-[10px] mr-1 flex items-center gap-[5px]" aria-label="Fit"><svg class="h-4 w-4" viewBox="0 0 16 16" fill="none"><path d="M10 10l5 5" stroke="#333" stroke-width="2.500" /><circle cx="6.500" cy="6.500" r="5.700" fill="#f4f6f6" stroke="#444c58" stroke-width="1.200" /><path d="M4 4h5v5H4z" stroke="#333" /></svg><svg class="h-[5px] w-[6px]"><use href="#caret" /></svg></button>
        </div>
        <div class="flex items-center gap-[5px] bg-[#c8c8c8] pl-1 pr-[3px]">
          <button class="flex items-center gap-[3px]" aria-label="Display settings"><svg class="h-4 w-4" viewBox="0 0 16 16"><path d="M.7 1.500h14.600v10.500H.7z" fill="#f2f2f2" stroke="#333" stroke-width="1.200" /><path d="M3 3.500h10v6.500H3z" fill="#8fb2dc" stroke="#335f98" /><path d="M5 15h6M7 12v3h2v-3" stroke="#333" fill="#ddd" /></svg><svg class="h-[5px] w-[6px]"><use href="#caret" /></svg></button>
          <button class="flex items-center gap-[3px]" aria-label="Grid settings"><svg class="h-4 w-4" viewBox="0 0 16 16"><path d="M.5.5h15v15H.5z" fill="#eee" /><path d="M.5.500h15v15H.5zM3.500 0v16M6.500 0v16M9.500 0v16M12.500 0v16M0 3.500h16M0 6.500h16M0 9.500h16M0 12.500h16" fill="none" stroke="#454c58" stroke-width=".8" /></svg><svg class="h-[5px] w-[6px]"><use href="#caret" /></svg></button>
          <button class="flex items-center gap-[3px]" aria-label="Viewports"><svg class="h-4 w-4" viewBox="0 0 16 16"><path d="M.7 1.700h6.600v5.600H.7zM8.700 1.700h6.600v5.600H8.700zM.7 8.700h6.600v5.600H.7zM8.700 8.700h6.600v5.600H8.700z" fill="#a9c2e4" stroke="#27456f" stroke-width="1.300" /></svg><svg class="h-[5px] w-[6px]"><use href="#caret" /></svg></button>
        </div>
      </nav>

      <p class="absolute bottom-2 right-9 text-[11px] font-bold text-[#333]">1 Profile | Area : 1361.822 mm^2</p>
    </main>

    <!-- Timeline -->
    <footer class="shrink-0">
      <div class="flex h-[50px] items-start bg-[#cbcbcb] pl-[9px] pr-2">
        <div class="mt-4 flex w-[133px] items-center gap-[9px]">
          <button aria-label="First"><svg class="h-4 w-4" viewBox="0 0 16 16" fill="#444"><path d="M1 1h2v14H1zM12 1.500v13L3 8z" /></svg></button>
          <button aria-label="Step back"><svg class="h-4 w-4" viewBox="0 0 16 16" fill="#444"><path d="M10 2v12L1 8zM11.500 5h2v6h-2z" /></svg></button>
          <button aria-label="Play"><svg class="h-4 w-4" viewBox="0 0 16 16" fill="#444"><path d="M2 0l11 8-11 8z" /></svg></button>
          <button aria-label="Step forward"><svg class="h-4 w-4" viewBox="0 0 16 16" fill="#444"><path d="M5 2v12l9-6zM1.500 5h2v6h-2z" /></svg></button>
          <button aria-label="Last"><svg class="h-4 w-4" viewBox="0 0 16 16" fill="#444"><path d="M12 1h2v14h-2zM3 1.500v13L12 8z" /></svg></button>
        </div>
        <div class="mt-[13px]">
          <div id="features" class="flex"></div>
          <div id="ticks" class="mx-[11px] flex h-[6px] justify-between border-b-2 border-[#666]"></div>
        </div>
        <svg class="-ml-[5px] mt-[11px] h-8 w-[11px]" viewBox="0 0 11 32"><path d="M0 0h11v4L6.500 9v23h-2V9L0 4z" fill="#5e5e5e" /></svg>
        <button class="ml-auto mt-4" aria-label="Timeline settings"><svg class="h-[18px] w-[18px]"><use href="#gear" /></svg></button>
      </div>
      <div class="flex h-[23px] items-center border-t border-[#a4a4a4] bg-[#d2d2d2] pl-[6px] font-['Liberation_Sans_Narrow','Arial_Narrow',Roboto,sans-serif] text-[11px] text-[#5c5c5c]">
        <svg class="h-[9px] w-[9px]"><use href="#plus-dot" /></svg>
        <h2 class="ml-3">TEXT COMMANDS</h2>
      </div>
    </footer>

    <script>
      // Timeline features
      const features = ["sketch", "extrude", "sphere", "sketch", "box", "points", "move", "planes", "planes", "split", "split", "sketch", "extrude", "move", "sketch", "extrude", "sketch", "extrude"];
      document.getElementById("features").innerHTML = features
        .map((f, i) => `<button aria-label="${f}" class="flex h-6 w-6 items-center justify-center ${i === 0 ? "bg-[#5288b8]" : ""}"><svg class="h-[18px] w-4 ${i === 0 ? "" : "opacity-35"}"><use href="#${f}" /></svg></button>`)
        .join("");
      document.getElementById("ticks").innerHTML = features.map(() => `<span class="w-[2px] bg-[#666]"></span>`).join("");

      // Sketch, all sizes in mm times the zoom
      const mm = 12.9;
      const rad = Math.PI / 180;
      const pt = (r, deg) => `${(r * Math.cos(deg * rad)).toFixed(2)} ${(r * Math.sin(deg * rad)).toFixed(2)}`;
      let out = "";

      function gridPath(step, skip) {
        let d = "";
        for (let k = -120; k <= 120; k++) {
          if (skip && k % skip === 0) continue;
          const p = (k * step).toFixed(2);
          d += `M${p} -1500V1500M-1500 ${p}H1500`;
        }
        return d;
      }

      // Outer profile is drawn with 60 facets
      let outer = "";
      for (let a = 0; a < 360; a += 6) outer += (a ? "L" : "M") + pt(40 * mm, a);
      outer += "Z";

      // Inner profile: 16 LED pockets joined by short arcs
      const halfW = 6.25 * mm;
      const rOut = 34 * mm;
      const rIn = 32 * mm;
      const rMid = 33.5 * mm;
      const cornerR = Math.hypot(rOut, halfW);
      const cornerA = Math.atan2(halfW, rOut) / rad;
      const footA = Math.asin(halfW / rMid) / rad;
      let inner = "";
      for (let i = 0; i < 16; i++) {
        const a = i * 22.5;
        inner += (i ? `A${rMid} ${rMid} 0 0 1 ` : "M") + pt(rMid, a - footA);
        inner += `L${pt(cornerR, a - cornerA)}L${pt(cornerR, a + cornerA)}L${pt(rMid, a + footA)}`;
      }
      inner += `A${rMid} ${rMid} 0 0 1 ${pt(rMid, -footA)}Z`;

      out += `<clipPath id="inside"><path d="${inner}" /></clipPath>`;
      out += `<path d="${inner}" fill="#f0e7db" />`;
      out += `<path d="${gridPath(mm, 5)}" stroke="#000" stroke-opacity=".09" fill="none" />`;
      out += `<path d="${gridPath(mm * 5)}" stroke="#000" stroke-opacity=".17" fill="none" />`;
      out += `<path d="M-1500 .5H1500" stroke="#cf6464" /><path d="M0 -1500V1500" stroke="#58cf58" />`;
      out += `<path d="${outer}" fill="none" stroke="#fff" stroke-opacity=".75" stroke-width="8" />`;
      out += `<path d="${inner}" fill="none" stroke="#fff" stroke-opacity=".5" stroke-width="10" clip-path="url(#inside)" />`;
      out += `<circle r="${45.5 * mm}" fill="none" stroke="#3a3a3a" stroke-width="1.3" stroke-dasharray="12 5" />`;
      out += `<circle r="${rMid}" fill="none" stroke="#000" stroke-width="1.4" />`;

      // Diameter dimensions
      const arrow = (x, y, deg) => `<path d="M0 0L-12 -3V3z" transform="translate(${x} ${y}) rotate(${deg})" />`;
      const dims = [
        { text: "Ø67.00", r: rMid, x: 741.5, y: -194.5, tx: 743 },
        { text: "Ø80.00", r: 40 * mm, x: 738.5, y: -135, tx: 739 },
        { text: "Ø91.00", r: 45.5 * mm, x: 741.5, y: -63.5, tx: 741 },
      ];
      for (const d of dims) {
        const a = Math.atan2(d.y, d.x);
        const x = d.r * Math.cos(a);
        const y = d.r * Math.sin(a);
        out += `<path d="M${-x} ${-y}L${d.x} ${d.y}h48" fill="none" stroke="#000" stroke-width="1.3" />`;
        out += arrow(x, y, a / rad) + arrow(-x, -y, a / rad + 180);
        out += `<text x="${d.tx}" y="${d.y - 7}" font-size="15" fill="#444">${d.text}</text>`;
      }

      // Selected profile
      out += `<path d="${outer}${inner}" fill="#2873eb" fill-opacity=".6" fill-rule="evenodd" />`;
      out += `<path d="${outer}" fill="none" stroke="#2f6cc4" stroke-width="2.2" />`;

      // LED outlines and midpoints
      for (let i = 0; i < 16; i++) {
        out += `<g transform="rotate(${i * 22.5})"><path d="M${rMid * Math.cos(footA * rad)} ${-halfW}H${rIn}V${halfW}H${rMid * Math.cos(footA * rad)}" fill="none" stroke="#0a50ff" stroke-width="1.3" /></g>`;
      }
      out += `<path d="${inner}" fill="none" stroke="#ff9c9c" stroke-width="3" clip-path="url(#inside)" />`;
      out += `<path d="${inner}" fill="none" stroke="#f01420" stroke-width="1.8" />`;
      for (let i = 1; i < 16; i++) {
        out += `<circle cx="${33 * mm * Math.cos(i * 22.5 * rad)}" cy="${33 * mm * Math.sin(i * 22.5 * rad)}" r="4" fill="#fff" stroke="#7c7c7c" stroke-width="1.3" />`;
      }
      out += `<circle cx="${45.5 * mm}" r="4" fill="#fff" stroke="#7c7c7c" stroke-width="1.3" />`;

      // First LED: construction diagonals, 12.50 and 2.00 dimensions
      out += `<path d="M${rIn} ${-halfW}L${rOut} ${halfW}M${rOut} ${-halfW}L${rIn} ${halfW}" stroke="#e08a48" stroke-width="1.3" stroke-dasharray="10 4" />`;
      out += `<circle cx="${33 * mm}" r="4" fill="#333" stroke="#777" />`;
      out += `<path d="M386.500 -80.500h21M386.500 80.500h21M392.500 -80.500v161M299.500 103.500h139M413 86v23M438.500 86v23" stroke="#222" stroke-width="1.3" />`;
      out += arrow(392.5, -80.5, -90) + arrow(392.5, 80.5, 90);
      out += `<path d="M414 103.500l10 -3v6zM431 100.500v6l-6 -3z" />`;
      out += `<text x="303" y="97.500" font-size="15" fill="#444">2.00</text>`;
      out += `<text transform="translate(376 3) rotate(90)" font-size="15" fill="#444">12.50</text>`;

      // Constraint glyphs
      const parallel = (x, y) => `<g transform="translate(${x} ${y}) rotate(-45)" fill="#bbb" fill-opacity=".4" stroke="#666" stroke-opacity=".7" stroke-width=".9"><rect x="-9" y="-4" width="18" height="2.500" rx="1" /><rect x="-9" y="-1" width="18" height="2.500" rx="1" /><rect x="-9" y="2" width="18" height="2.500" rx="1" /></g>`;
      out += parallel(412, 12) + parallel(439, 39) + parallel(419, 95);
      out += `<g fill="#aaa" fill-opacity=".6" stroke="#666" stroke-width=".9"><rect x="415" y="-77" width="19" height="3" rx="1" /><rect x="415" y="-73" width="19" height="3" rx="1" /><rect x="416" y="-69" width="18" height="3" rx="1" /><path d="M417 -61l6 -6M422 -60l7 -7M427 -60l6 -6" stroke-width="2" /></g>`;

      // Origin
      out += `<circle r="10" fill="#777" fill-opacity=".45" /><circle r="4.600" />`;
      out += `<g fill="none"><circle cx="-11.500" cy="-11.500" r="8.500" fill="#aaa" stroke="#666" /><circle cx="-11.500" cy="-11.500" r="5.500" fill="#e8e8e8" stroke="#444" stroke-width="1.500" /><circle cx="-11.500" cy="-11.500" r="2.500" stroke="#555" /></g>`;
      out += `<g fill="#eee" stroke="#777"><path d="M-25 13a11 11 0 1 0 21 0l-5 -2 -2 -6h-7l-2 6z" /><rect x="-18" y="12" width="7" height="7" /><path d="M-22 15.500h1M-8 15.500h1M-14.500 22v1M-14.500 8v1" stroke="#444" stroke-width="2" /></g>`;

      document.getElementById("drawing").innerHTML = out;
    </script>
  </body>
</html>
